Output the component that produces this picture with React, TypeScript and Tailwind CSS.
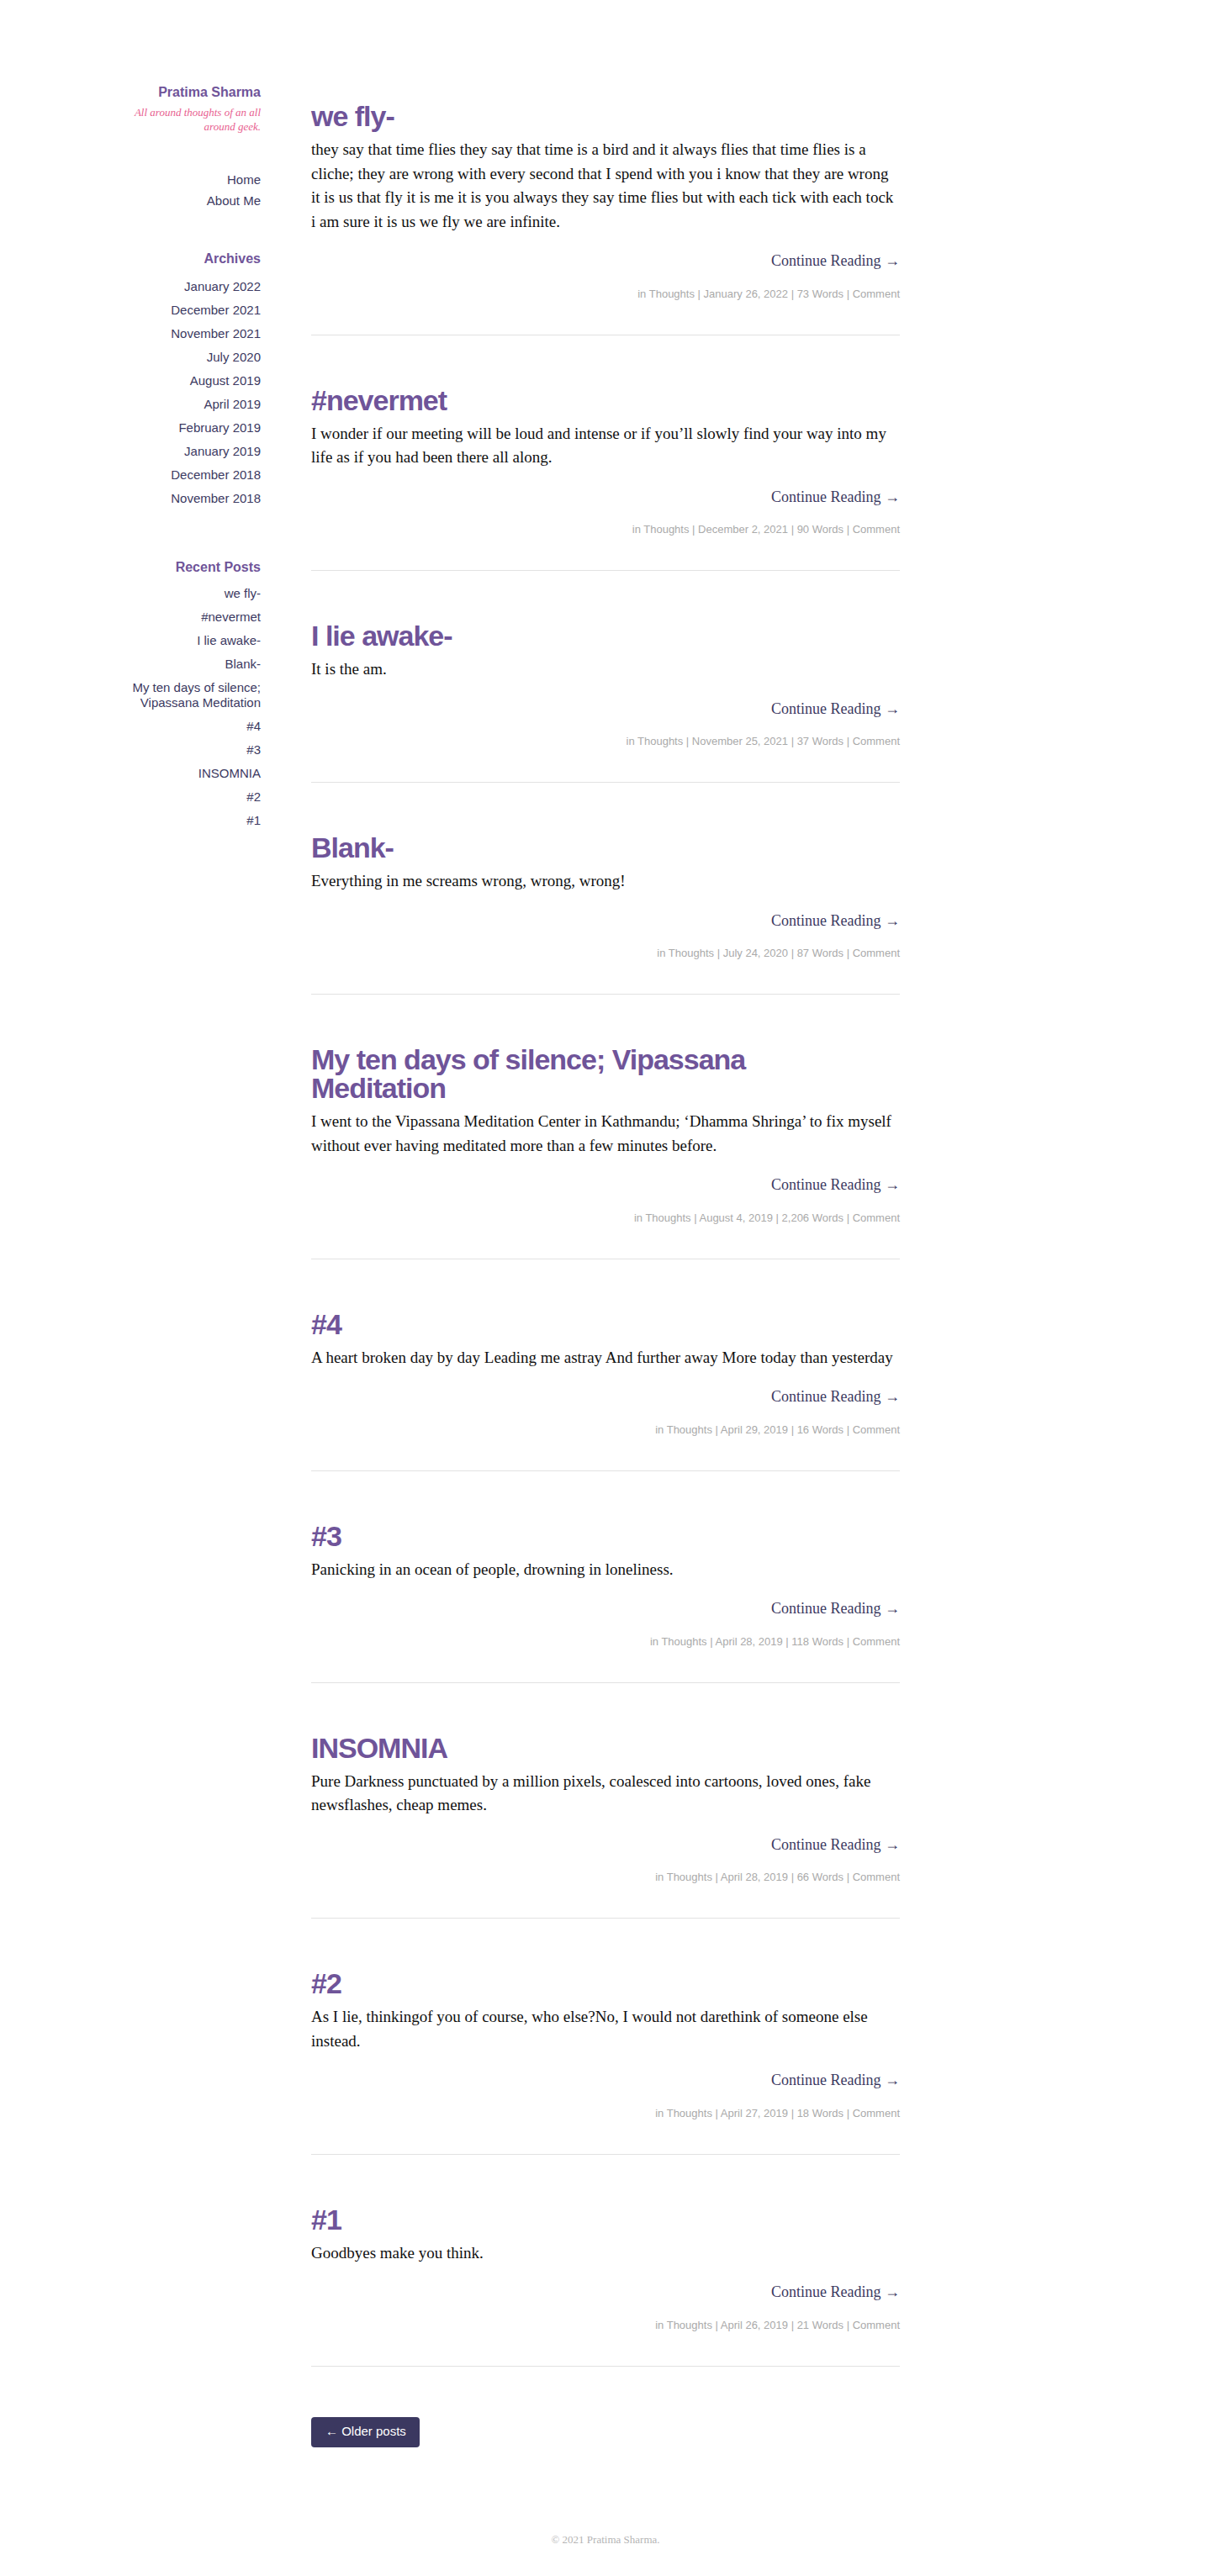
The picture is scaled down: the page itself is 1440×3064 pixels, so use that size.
import React from "react";

type Post = {
  title: string;
  excerpt: string;
  date: string;
  words: string;
};

const posts: Post[] = [
  {
    title: "we fly-",
    excerpt:
      "they say that time flies they say that time is a bird and it always flies that time flies is a cliche; they are wrong with every second that I spend with you i know that they are wrong it is us that fly it is me it is you always they say time flies but with each tick with each tock i am sure it is us we fly we are infinite.",
    date: "January 26, 2022",
    words: "73 Words",
  },
  {
    title: "#nevermet",
    excerpt:
      "I wonder if our meeting will be loud and intense or if you’ll slowly find your way into my life as if you had been there all along.",
    date: "December 2, 2021",
    words: "90 Words",
  },
  { title: "I lie awake-", excerpt: "It is the am.", date: "November 25, 2021", words: "37 Words" },
  {
    title: "Blank-",
    excerpt: "Everything in me screams wrong, wrong, wrong!",
    date: "July 24, 2020",
    words: "87 Words",
  },
  {
    title: "My ten days of silence; Vipassana Meditation",
    excerpt:
      "I went to the Vipassana Meditation Center in Kathmandu; ‘Dhamma Shringa’ to fix myself without ever having meditated more than a few minutes before.",
    date: "August 4, 2019",
    words: "2,206 Words",
  },
  {
    title: "#4",
    excerpt: "A heart broken day by day Leading me astray And further away More today than yesterday",
    date: "April 29, 2019",
    words: "16 Words",
  },
  {
    title: "#3",
    excerpt: "Panicking in an ocean of people, drowning in loneliness.",
    date: "April 28, 2019",
    words: "118 Words",
  },
  {
    title: "INSOMNIA",
    excerpt:
      "Pure Darkness punctuated by a million pixels, coalesced into cartoons, loved ones, fake newsflashes, cheap memes.",
    date: "April 28, 2019",
    words: "66 Words",
  },
  {
    title: "#2",
    excerpt:
      "As I lie, thinkingof you of course, who else?No, I would not darethink of someone else instead.",
    date: "April 27, 2019",
    words: "18 Words",
  },
  { title: "#1", excerpt: "Goodbyes make you think.", date: "April 26, 2019", words: "21 Words" },
];

const archives = [
  "January 2022",
  "December 2021",
  "November 2021",
  "July 2020",
  "August 2019",
  "April 2019",
  "February 2019",
  "January 2019",
  "December 2018",
  "November 2018",
];

const recent = [
  "we fly-",
  "#nevermet",
  "I lie awake-",
  "Blank-",
  "My ten days of silence; Vipassana Meditation",
  "#4",
  "#3",
  "INSOMNIA",
  "#2",
  "#1",
];

function Sidebar() {
  return (
    <aside className="w-[160px] shrink-0 text-right font-['Liberation_Sans',Arial,sans-serif]">
      <h1 className="text-[16px] leading-[20px] font-bold text-[#6f5499]">Pratima Sharma</h1>
      <p className="mt-[5px] text-[13px] leading-[17px] italic text-[#e8608f] font-['Liberation_Serif','Times_New_Roman',serif]">
        All around thoughts of an all around geek.
      </p>

      <nav className="mt-[46px] flex flex-col gap-[7px] text-[15px] leading-[18px] text-[#3c3a62]">
        <a href="#">Home</a>
        <a href="#">About Me</a>
      </nav>

      <h4 className="mt-[50px] text-[16px] leading-[20px] font-bold text-[#6f5499]">Archives</h4>
      <ul className="mt-[14px] flex flex-col gap-[10px] text-[15px] leading-[18px] text-[#3c3a62]">
        {archives.map((a) => (
          <li key={a}>
            <a href="#">{a}</a>
          </li>
        ))}
      </ul>

      <h4 className="mt-[63px] text-[16px] leading-[20px] font-bold text-[#6f5499]">Recent Posts</h4>
      <ul className="mt-[12px] flex flex-col gap-[10px] text-[15px] leading-[18px] text-[#3c3a62]">
        {recent.map((r) => (
          <li key={r}>
            <a href="#">{r}</a>
          </li>
        ))}
      </ul>
    </aside>
  );
}

function PostItem({ post, first }: { post: Post; first: boolean }) {
  return (
    <article className={first ? "" : "pt-[60px]"}>
      <h2 className="max-w-[640px] text-[34px] leading-[34px] tracking-[-1px] font-bold text-[#6f5499] font-['Liberation_Sans',Arial,sans-serif]">
        <a href="#">{post.title}</a>
      </h2>
      <p className="mt-[9px] text-[19px] leading-[28.5px] text-[#111] font-['Liberation_Serif','Times_New_Roman',serif]">
        {post.excerpt}
      </p>
      <div className="mt-[18px] text-right text-[18px] leading-[28.5px] text-[#3c3a62] font-['Liberation_Serif','Times_New_Roman',serif]">
        <a href="#">Continue Reading →</a>
      </div>
      <div className="mt-[15px] text-right text-[13px] leading-[20px] text-[#aaaaaa] font-['Liberation_Sans',Arial,sans-serif]">
        in <a href="#">Thoughts</a> | {post.date} | {post.words} | <a href="#">Comment</a>
      </div>
      <hr className="mt-[38px] border-0 border-t border-[#e2e2e2]" />
    </article>
  );
}

export default function App() {
  return (
    <div className="min-h-[3064px] bg-white">
      <div className="flex pl-[150px] pt-[100px]">
        <Sidebar />
        <main className="ml-[60px] w-[700px] pt-[21px]">
          {posts.map((p, i) => (
            <PostItem key={p.title} post={p} first={i === 0} />
          ))}
          <div className="mt-[60px]">
            <a
              href="#"
              className="inline-flex h-[36px] items-center rounded-[4px] bg-[#3b3860] pl-[17px] pr-[16px] text-[15px] text-white font-['Liberation_Sans',Arial,sans-serif]"
            >
              ← Older posts
            </a>
          </div>
        </main>
      </div>
      <footer className="mt-[101px] pb-[30px] text-center text-[13px] leading-[17px] text-[#b5b5b5] font-['Liberation_Serif','Times_New_Roman',serif]">
        © 2021 Pratima Sharma.
      </footer>
    </div>
  );
}
